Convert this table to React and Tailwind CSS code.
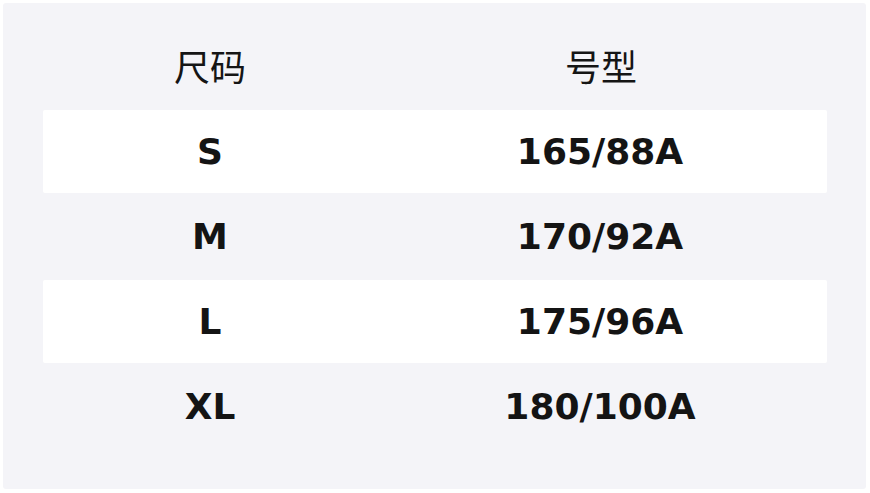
export default function App() {
  const rows = [
    ["S", "165/88A"],
    ["M", "170/92A"],
    ["L", "175/96A"],
    ["XL", "180/100A"],
  ];
  const font = { fontFamily: '"DejaVu Sans", "Noto Sans CJK SC", sans-serif' };
  return (
    <div className="w-[870px] h-[493px] bg-white p-[3px]" style={font}>
      <div className="w-[863px] h-[486px] bg-[#f4f4f8] rounded-[3px] pt-[23px] pl-[40px] pr-[39px] flex flex-col gap-[2px]">
        <div className="grid grid-cols-[334px_1fr] h-[82px] pb-[5px] items-center text-[36px] text-[#151515]" style={{ fontFamily: '"Noto Sans CJK SC", sans-serif' }}>
          <div className="text-center">尺码</div>
          <div className="text-center pr-[2px]">号型</div>
        </div>
        {rows.map(([a, b], i) => (
          <div
            key={a}
            className={
              i % 2 === 0
                ? "grid grid-cols-[334px_1fr] h-[83px] items-center bg-white rounded-[2px] text-[36px] font-bold text-[#141414]"
                : "grid grid-cols-[334px_1fr] h-[83px] items-center text-[36px] font-bold text-[#141414]"
            }
          >
            <div className="text-center">{a}</div>
            <div className="text-center pr-[4px]">{b}</div>
          </div>
        ))}
      </div>
    </div>
  );
}
